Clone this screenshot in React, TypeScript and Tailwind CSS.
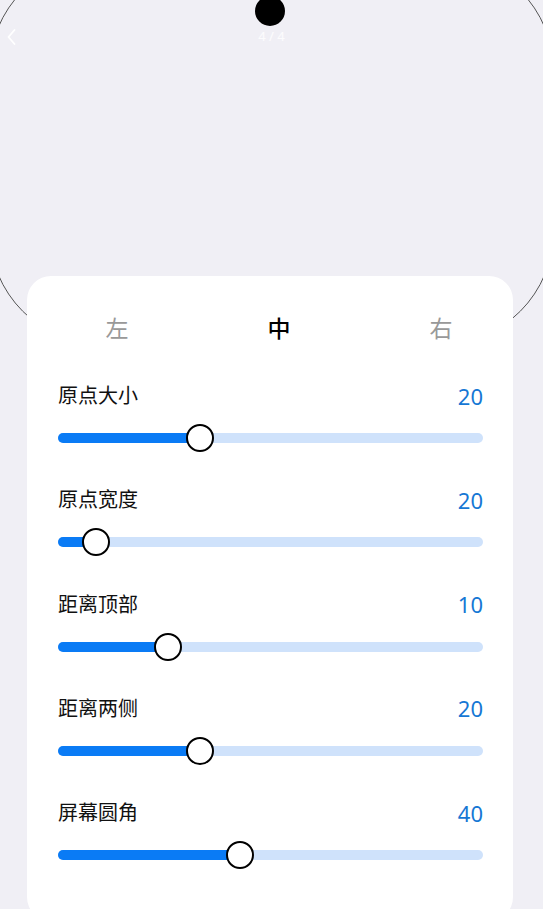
type SliderRow = {
  label: string
  value: number
  thumbX: number
}

const rows: SliderRow[] = [
  { label: '原点大小', value: 20, thumbX: 142 },
  { label: '原点宽度', value: 20, thumbX: 38 },
  { label: '距离顶部', value: 10, thumbX: 110 },
  { label: '距离两侧', value: 20, thumbX: 142 },
  { label: '屏幕圆角', value: 40, thumbX: 182 },
]

const font = "font-['Noto_Sans','Noto_Sans_CJK_SC',sans-serif]"

function Slider({ thumbX }: { thumbX: number }) {
  return (
    <div className="relative mt-[14px] flex h-[28px] items-center">
      <div className="h-[10px] w-full rounded-full bg-[#cfe2fb]">
        <div className="h-full rounded-full bg-[#0a7bf5]" style={{ width: thumbX }} />
      </div>
      <div
        className="absolute top-0 h-[28px] w-[28px] -translate-x-1/2 rounded-full border-2 border-black bg-white"
        style={{ left: thumbX }}
      />
    </div>
  )
}

export default function App() {
  return (
    <div className={`relative h-[909px] w-[543px] overflow-hidden bg-[#f0eff5] ${font}`}>
      {/* screen preview */}
      <div className="relative h-[276px]">
        <div className="absolute left-[-11px] top-[-43px] h-[388px] w-[565px] rounded-[114px] border border-[#555]" />
        <div className="absolute left-[255px] top-[-4px] h-[30px] w-[30px] rounded-full bg-black" />
        <div className="relative flex h-[74px] items-center px-[7px]">
          <svg width="9" height="16" viewBox="0 0 9 16" fill="none" className="shrink-0">
            <path d="M7.5 1L1.5 8l6 7" stroke="white" strokeWidth="1.8" strokeLinecap="round" strokeLinejoin="round" />
          </svg>
          <span className="absolute left-1/2 -translate-x-1/2 text-[13px] text-white/80">4 / 4</span>
        </div>
      </div>

      <div className="relative z-10 ml-[27px] h-[645px] w-[486px] rounded-[24px] bg-white pl-[31px] pr-[30px] pt-[28px]">
        <div className="-ml-[31px] -mr-[30px] flex h-[48px] items-center pl-[9px]">
          <div className="w-[162px] shrink-0 text-center text-[23px] text-[#999]">左</div>
          <div className="w-[162px] shrink-0 text-center text-[23px] font-medium text-black">中</div>
          <div className="w-[162px] shrink-0 text-center text-[23px] text-[#999]">右</div>
        </div>

        <div className="mt-[30px] flex flex-col gap-[34.3px]">
          {rows.map((r) => (
            <div key={r.label}>
              <div className="flex h-[28px] items-center justify-between">
                <span className="text-[20px] text-[#111]">{r.label}</span>
                <span className="text-[22px] text-[#1677d4]">{r.value}</span>
              </div>
              <Slider thumbX={r.thumbX} />
            </div>
          ))}
        </div>
      </div>
    </div>
  )
}
